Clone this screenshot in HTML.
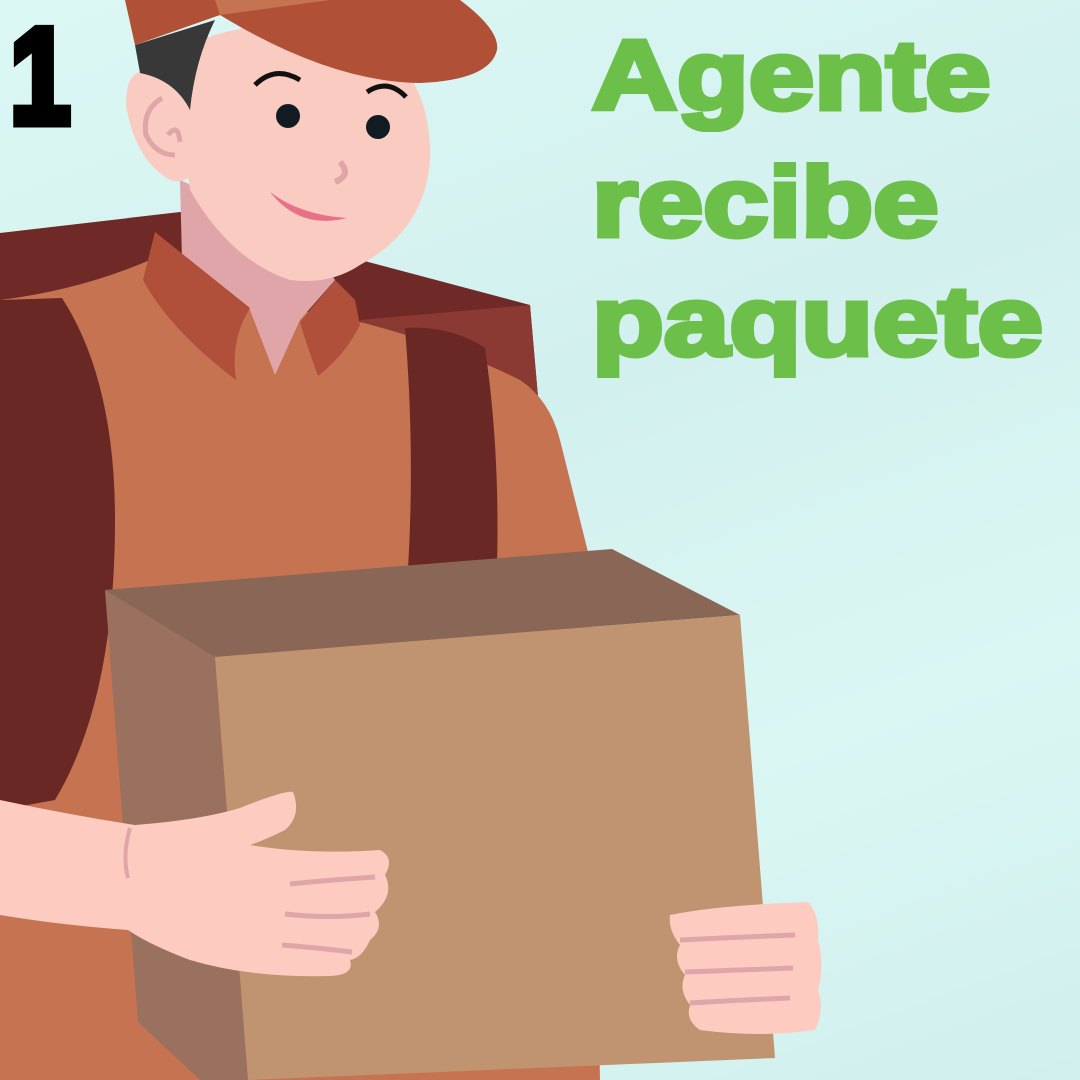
<!DOCTYPE html>
<html><head><meta charset="utf-8"><style>
html,body{margin:0;padding:0}
body{width:1080px;height:1080px;overflow:hidden;position:relative;background:linear-gradient(160deg,#dcf8f5 0%,#d2f0ee 40%,#dbf7f4 70%,#d0efed 100%)}
svg{position:absolute;left:0;top:0}
.t{position:absolute;font-family:"Liberation Sans",sans-serif;font-weight:900;color:#6cbf49;font-size:98px;line-height:1;-webkit-text-stroke:5px #6cbf49;transform-origin:0 0;transform:scaleX(1.2);white-space:nowrap}
.n{position:absolute;left:10px;top:8px;font-family:"Liberation Sans",sans-serif;font-weight:900;font-size:136px;color:#000;-webkit-text-stroke:9px #000;line-height:1;transform-origin:0 0;transform:scaleX(0.8)}
</style></head><body>
<svg width="1080" height="1080" viewBox="0 0 1080 1080">
<polygon points="0,233 180,212 530,305 540,420 300,480 0,500" fill="#6f2a27"/>
<polygon points="360,320 530,305 540,420 420,420" fill="#8b3a33"/>
<path d="M0,300 Q80,290 150,260 L250,310 Q330,310 360,322 Q450,345 520,380 Q550,400 560,440 L590,560 L600,1080 L0,1080 Z" fill="#c67352"/>
<path d="M0,300 L62,298 Q115,380 115,520 Q115,700 55,800 L0,810 Z" fill="#6a2825"/>
<path d="M405,328 Q450,325 485,348 Q500,450 497,565 L408,570 Q415,450 405,328 Z" fill="#6a2825"/>
<path d="M180,180 L182,260 L250,310 L275,375 L300,320 L335,280 L310,240 Z" fill="#dfa5a9"/>
<path d="M155,232 L250,308 Q230,340 236,380 Q170,330 143,280 Z" fill="#b0503a"/>
<path d="M335,280 L355,300 L360,325 Q345,355 318,376 Q305,340 300,322 Z" fill="#b0503a"/>
<path d="M200,40 Q280,10 370,40 Q432,75 430,160 Q425,230 360,265 Q330,285 290,280 Q230,260 190,190 Q178,120 200,40 Z" fill="#facbc0"/>
<path d="M140,72 Q175,65 192,95 L195,170 Q185,185 170,180 Q135,160 126,105 Q126,75 140,72Z" fill="#facbc0"/>
<path d="M162,98 Q142,110 146,135 Q156,155 175,155 M168,135 Q178,122 180,142" stroke="#dfa5a9" stroke-width="5" fill="none"/>
<path d="M135,45 L215,20 Q195,60 190,110 Q175,80 140,73 Z" fill="#383838"/>
<path d="M125,0 L460,0 Q500,30 497,50 Q490,80 420,83 Q330,82 220,15 L135,45 Z" fill="#b05037"/>
<path d="M215,0 L330,0 L220,15 Z" fill="#c67352"/>
<path d="M255,85 Q275,65 300,80" stroke="#111" stroke-width="5" fill="none"/>
<path d="M367,92 Q388,78 406,97" stroke="#111" stroke-width="5" fill="none"/>
<circle cx="288" cy="116" r="12" fill="#111c22"/>
<circle cx="378" cy="127" r="12" fill="#111c22"/>
<path d="M340,162 Q352,175 335,182" stroke="#dfa5a9" stroke-width="6" fill="none"/>
<path d="M270,192 Q300,230 347,218 Q300,215 270,192Z" fill="#e97187"/>
<polygon points="105,590 612,549 740,615 215,657" fill="#896656"/>
<polygon points="105,590 215,657 248,1080 200,1080 138,1022" fill="#9a705f"/>
<polygon points="215,657 740,615 775,1058 248,1080" fill="#c09470"/>
<path d="M0,800 Q70,815 135,825 Q200,820 240,808 Q285,790 293,792 Q302,815 285,830 Q265,840 250,845 Q310,855 380,850 Q395,858 385,875 Q395,895 375,912 Q385,928 370,940 Q362,958 350,960 Q355,975 330,976 Q250,978 190,960 Q150,945 128,930 Q60,925 0,915 Z" fill="#fecbc0"/>
<path d="M130,828 Q122,855 128,878" stroke="#dfa5a9" stroke-width="4" fill="none"/>
<path d="M290,884 Q330,880 375,877 M285,914 Q330,919 370,914 M282,945 Q320,948 352,952" stroke="#dfa5a9" stroke-width="5" fill="none"/>
<path d="M670,915 Q720,905 808,902 Q820,915 818,940 Q825,965 818,990 Q825,1010 815,1030 Q760,1038 700,1030 Q685,1020 690,1005 Q678,990 685,975 Q672,960 680,945 Q668,930 670,915 Z" fill="#fecbc0"/>
<path d="M680,940 Q740,937 795,935 M685,972 Q740,970 793,968 M690,1003 Q740,1000 790,998" stroke="#dfa5a9" stroke-width="5" fill="none"/>
</svg>
<div class="n">1</div>
<div class="t" style="left:592px;top:26px">Agente</div>
<div class="t" style="left:592px;top:153px">recibe</div>
<div class="t" style="left:592px;top:272px">paquete</div>
</body></html>
